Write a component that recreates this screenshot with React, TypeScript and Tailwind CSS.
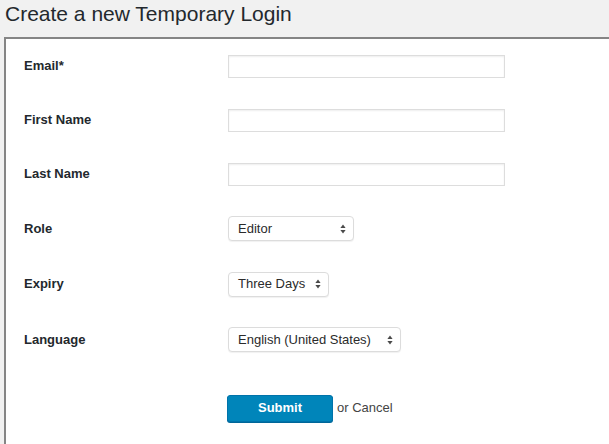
import React from 'react';

const font = { fontFamily: '"Liberation Sans", Arial, sans-serif' };

const TextRow: React.FC<{ label: string }> = ({ label }) => (
  <div className="flex items-center h-[54px]">
    <label className="w-[222px] pl-[18px] text-[13px] font-bold text-[#23282d]">{label}</label>
    <input
      type="text"
      className="w-[277px] h-[23px] bg-white border border-[#dddddd] shadow-[inset_0_1px_2px_rgba(0,0,0,0.07)] outline-none"
    />
  </div>
);

const Arrows = () => (
  <svg width="6" height="10" viewBox="0 0 6 10" className="shrink-0">
    <path d="M3 0.5 L5.6 4 L0.4 4 Z" fill="#4a4a4a" />
    <path d="M3 9.5 L5.6 6 L0.4 6 Z" fill="#4a4a4a" />
  </svg>
);

const SelectRow: React.FC<{ label: string; value: string; width: string; height: string }> = ({
  label,
  value,
  width,
  height,
}) => (
  <div className={`flex items-center ${height}`}>
    <label className="w-[222px] pl-[18px] text-[13px] font-bold text-[#23282d]">{label}</label>
    <div
      className={`${width} h-[25px] flex items-center justify-between pl-[9px] pr-[7px] bg-white border border-[#dcdcdc] rounded-[4px] shadow-[0_1px_1px_rgba(0,0,0,0.06)] text-[13px] text-[#2b2b2b]`}
    >
      <span>{value}</span>
      <Arrows />
    </div>
  </div>
);

const App: React.FC = () => {
  return (
    <div className="w-full h-screen overflow-hidden bg-[#f1f1f1]" style={font}>
      <h1 className="pt-[2px] pl-[5px] h-[37px] text-[21px] leading-[1.15] text-[#23282d] font-normal">
        Create a new Temporary Login
      </h1>
      <div className="ml-[4px] mr-[-40px] h-[600px] bg-white border-2 border-[#858585]">
        <TextRow label="Email*" />
        <TextRow label="First Name" />
        <TextRow label="Last Name" />
        <SelectRow label="Role" value="Editor" width="w-[126px]" height="h-[55px]" />
        <SelectRow label="Expiry" value="Three Days" width="w-[101px]" height="h-[56px]" />
        <SelectRow label="Language" value="English (United States)" width="w-[173px]" height="h-[55px]" />
        <div className="flex items-center h-[82px] pl-[221px]">
          <button className="w-[106px] h-[27px] rounded-[3px] bg-[#0085ba] border border-[#0073aa] shadow-[0_1px_0_#006799] text-white text-[13px] font-bold">
            Submit
          </button>
          <span className="ml-[4px] text-[13px] text-[#444444]">or Cancel</span>
        </div>
      </div>
    </div>
  );
};

export default App;
